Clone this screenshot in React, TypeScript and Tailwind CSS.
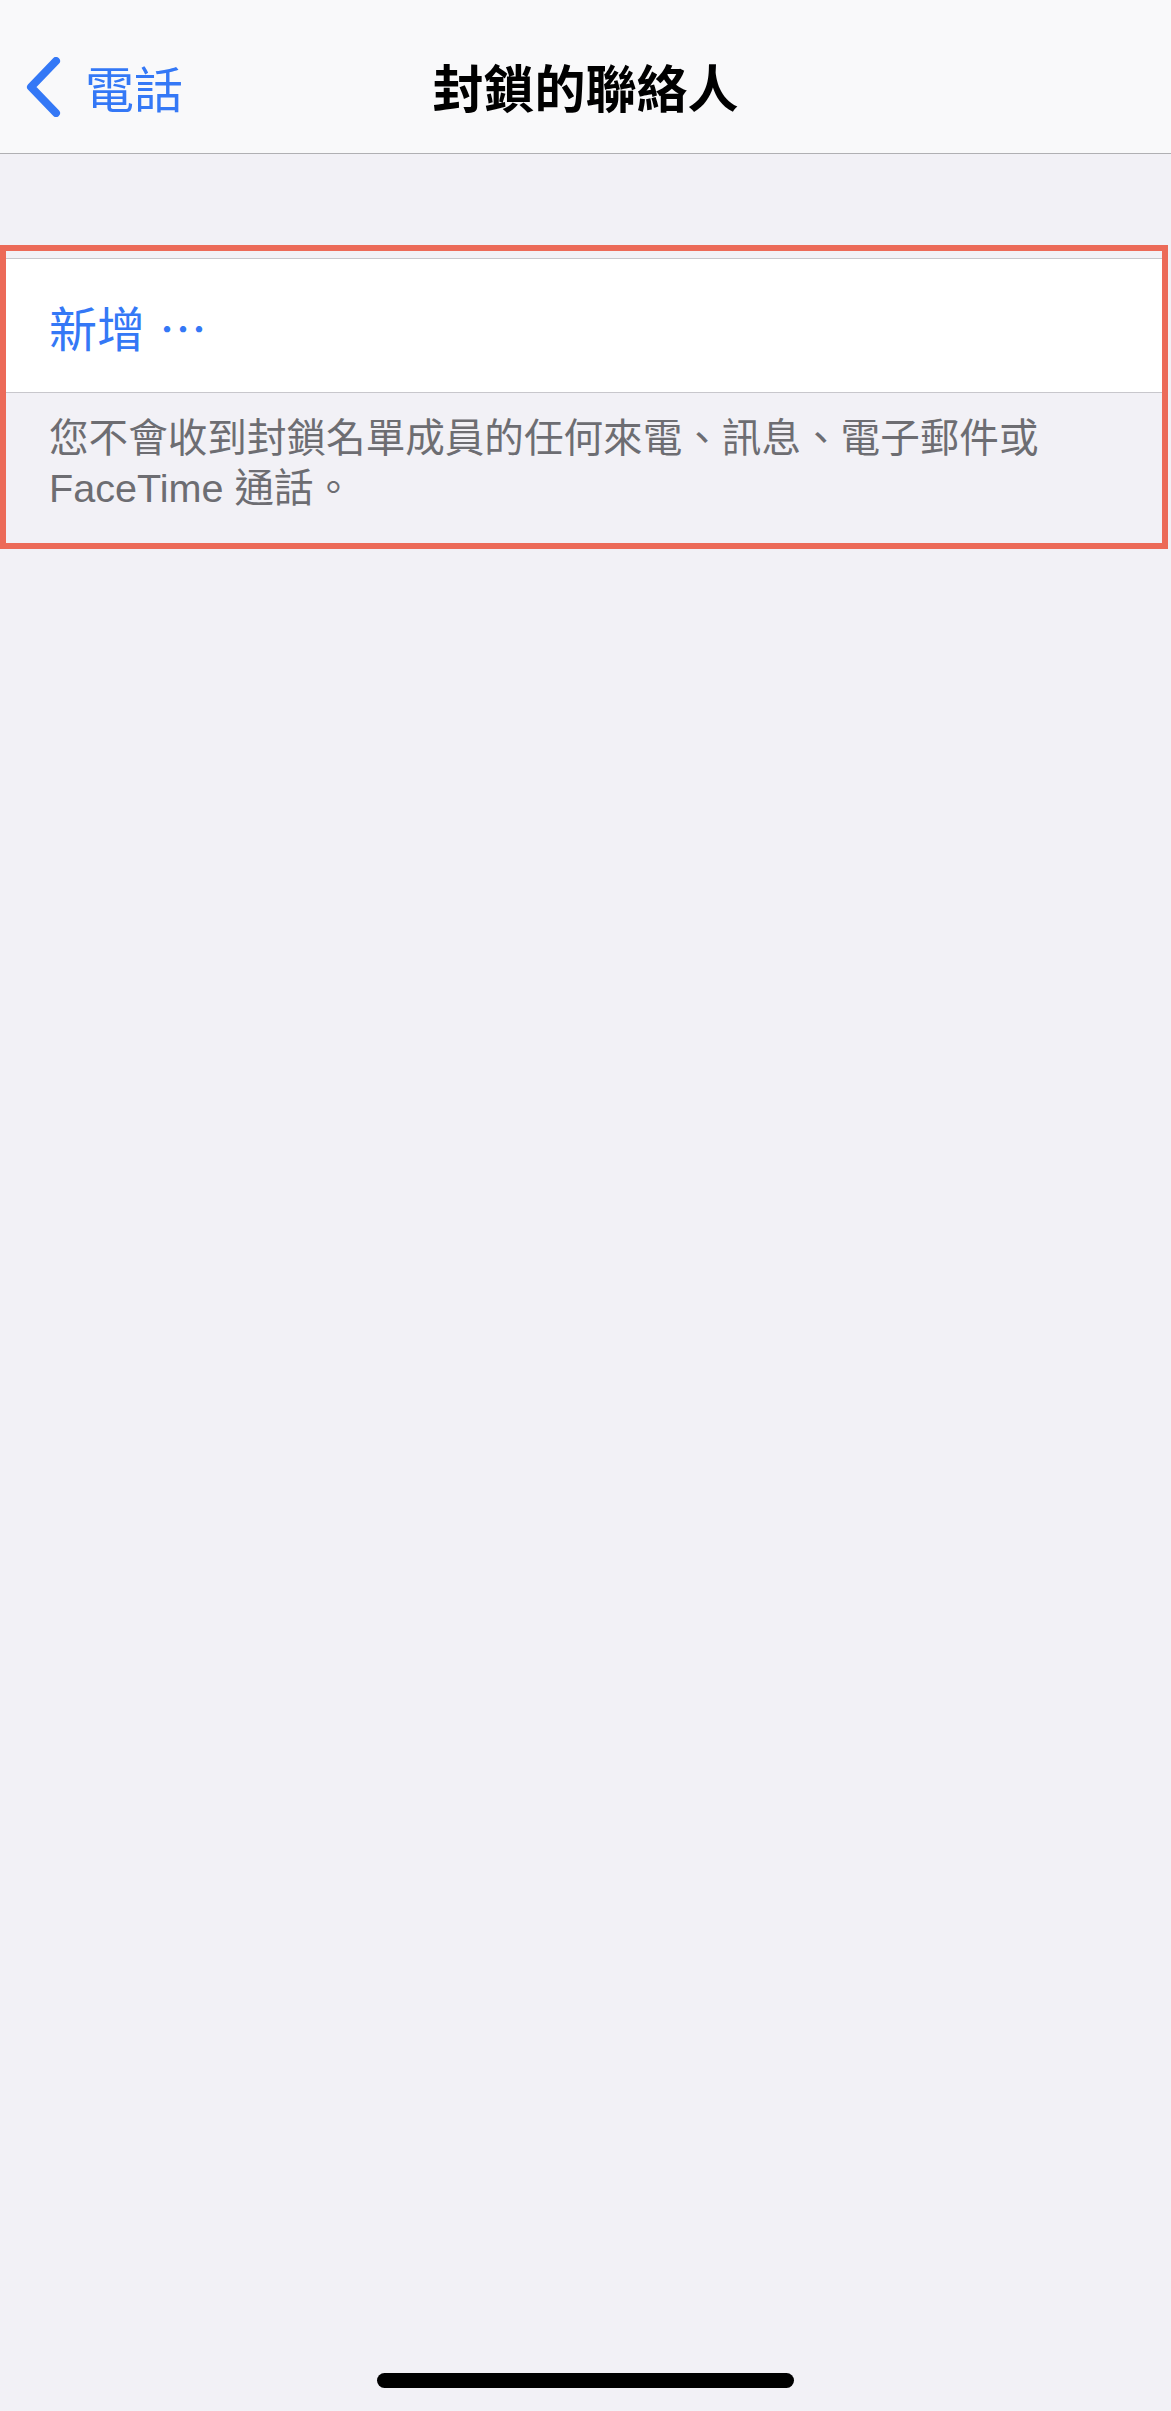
const BackChevron = () => (
  <svg width="36" height="60" viewBox="0 0 36 60" fill="none">
    <path
      d="M31 4 L6 30 L31 56"
      stroke="#3478f6"
      strokeWidth="8"
      strokeLinecap="round"
      strokeLinejoin="round"
    />
  </svg>
);

const NavBar = () => (
  <div className="grid h-[154px] grid-cols-[1fr_auto_1fr] items-center border-b border-[#b0b0b3] bg-[#f9f9fa] pt-[20px]">
    <div className="flex items-center pl-[25px]">
      <BackChevron />
      <span className="ml-[24px] text-[49px] leading-none text-[#3478f6]">電話</span>
    </div>
    <h1 className="text-[51px] font-bold leading-none text-black">封鎖的聯絡人</h1>
    <div />
  </div>
);

const BlockedSection = () => (
  <div className="mt-[91px] w-[1168px] border-[6px] border-[#ec6a58] pt-[7px]">
    <div className="flex h-[135px] items-center border-y border-[#c8c7cc] bg-white pl-[43px]">
      <span className="text-[48px] leading-none text-[#3478f6]">
        新增<span className="ml-[14px]">⋯</span>
      </span>
    </div>
    <p className="pb-[30px] pl-[43px] pr-[40px] pt-[20px] font-['Liberation_Sans','Noto_Sans_CJK_TC',sans-serif] text-[39.6px] leading-[50px] text-[#6d6d72]">
      您不會收到封鎖名單成員的任何來電、訊息、電子郵件或 FaceTime 通話。
    </p>
  </div>
);

export default function App() {
  return (
    <div className="flex h-[2411px] w-[1171px] flex-col bg-[#f2f1f6] font-['Noto_Sans_CJK_TC',sans-serif]">
      <NavBar />
      <BlockedSection />
      <div className="flex-1" />
      <div className="mx-auto mb-[23px] h-[15px] w-[417px] rounded-full bg-black" />
    </div>
  );
}
